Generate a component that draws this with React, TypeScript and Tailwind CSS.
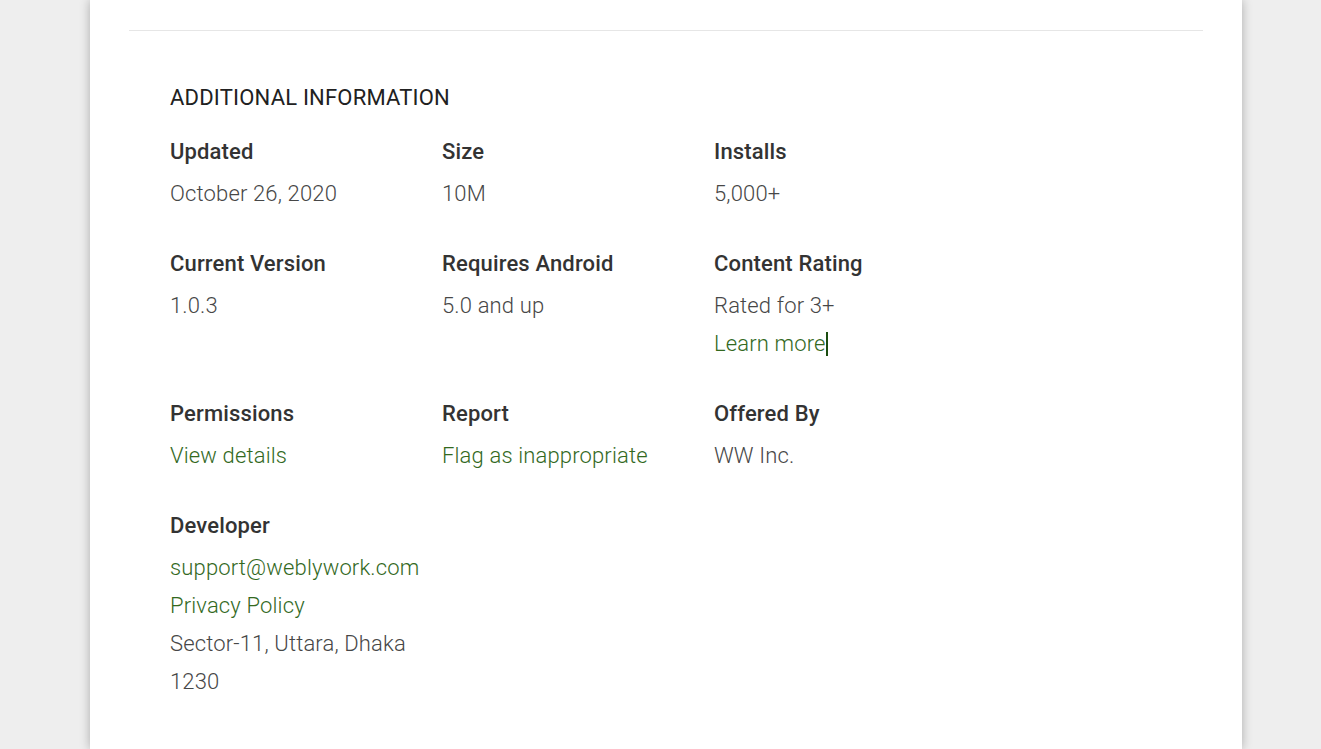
import React from 'react'

type Item = {
  label: string
  lines: { text: string; link?: boolean; caret?: boolean }[]
}

const rows: Item[][] = [
  [
    { label: 'Updated', lines: [{ text: 'October 26, 2020' }] },
    { label: 'Size', lines: [{ text: '10M' }] },
    { label: 'Installs', lines: [{ text: '5,000+' }] },
  ],
  [
    { label: 'Current Version', lines: [{ text: '1.0.3' }] },
    { label: 'Requires Android', lines: [{ text: '5.0 and up' }] },
    {
      label: 'Content Rating',
      lines: [{ text: 'Rated for 3+' }, { text: 'Learn more', link: true, caret: true }],
    },
  ],
  [
    { label: 'Permissions', lines: [{ text: 'View details', link: true }] },
    { label: 'Report', lines: [{ text: 'Flag as inappropriate', link: true }] },
    { label: 'Offered By', lines: [{ text: 'WW Inc.' }] },
  ],
  [
    {
      label: 'Developer',
      lines: [
        { text: 'support@weblywork.com', link: true },
        { text: 'Privacy Policy', link: true },
        { text: 'Sector-11, Uttara, Dhaka 1230' },
      ],
    },
  ],
]

function InfoBlock({ item }: { item: Item }) {
  return (
    <div className="w-[272px] pr-[12px]">
      <div className="text-[22px] leading-[28px] font-medium text-[#333333] tracking-[0.15px] mb-[9px]">
        {item.label}
      </div>
      {item.lines.map((l, i) => (
        <div
          key={i}
          className={
            'text-[22px] leading-[38px] font-light tracking-[0.15px] ' +
            (l.link ? 'text-[#33691e]' : 'text-[#474747]')
          }
        >
          {l.text}
          {l.caret && <span className="inline-block w-[2px] h-[24px] bg-[#1b4d10] align-middle -mt-[3px]" />}
        </div>
      ))}
    </div>
  )
}

export default function App() {
  return (
    <div
      className="h-[749px] overflow-hidden bg-[#eeeeee] flex"
      style={{ fontFamily: 'Roboto, "Noto Sans", sans-serif' }}
    >
      <div className="w-[1152px] ml-[90px] bg-white shadow-[0_0_10px_rgba(0,0,0,0.28)] h-full">
        <div className="px-[39px] pt-[30px]">
          <div className="h-px bg-[#e6e6e6]" />
        </div>
        <div className="pl-[80px] pt-[53px]">
          <h2 className="text-[22px] leading-[28px] font-normal text-[#212121] tracking-[0.2px]">
            ADDITIONAL INFORMATION
          </h2>
          <div className="mt-[26px] flex flex-col gap-[37px]">
            {rows.map((row, r) => (
              <div key={r} className="flex">
                {row.map((item) => (
                  <InfoBlock key={item.label} item={item} />
                ))}
              </div>
            ))}
          </div>
        </div>
      </div>
    </div>
  )
}
